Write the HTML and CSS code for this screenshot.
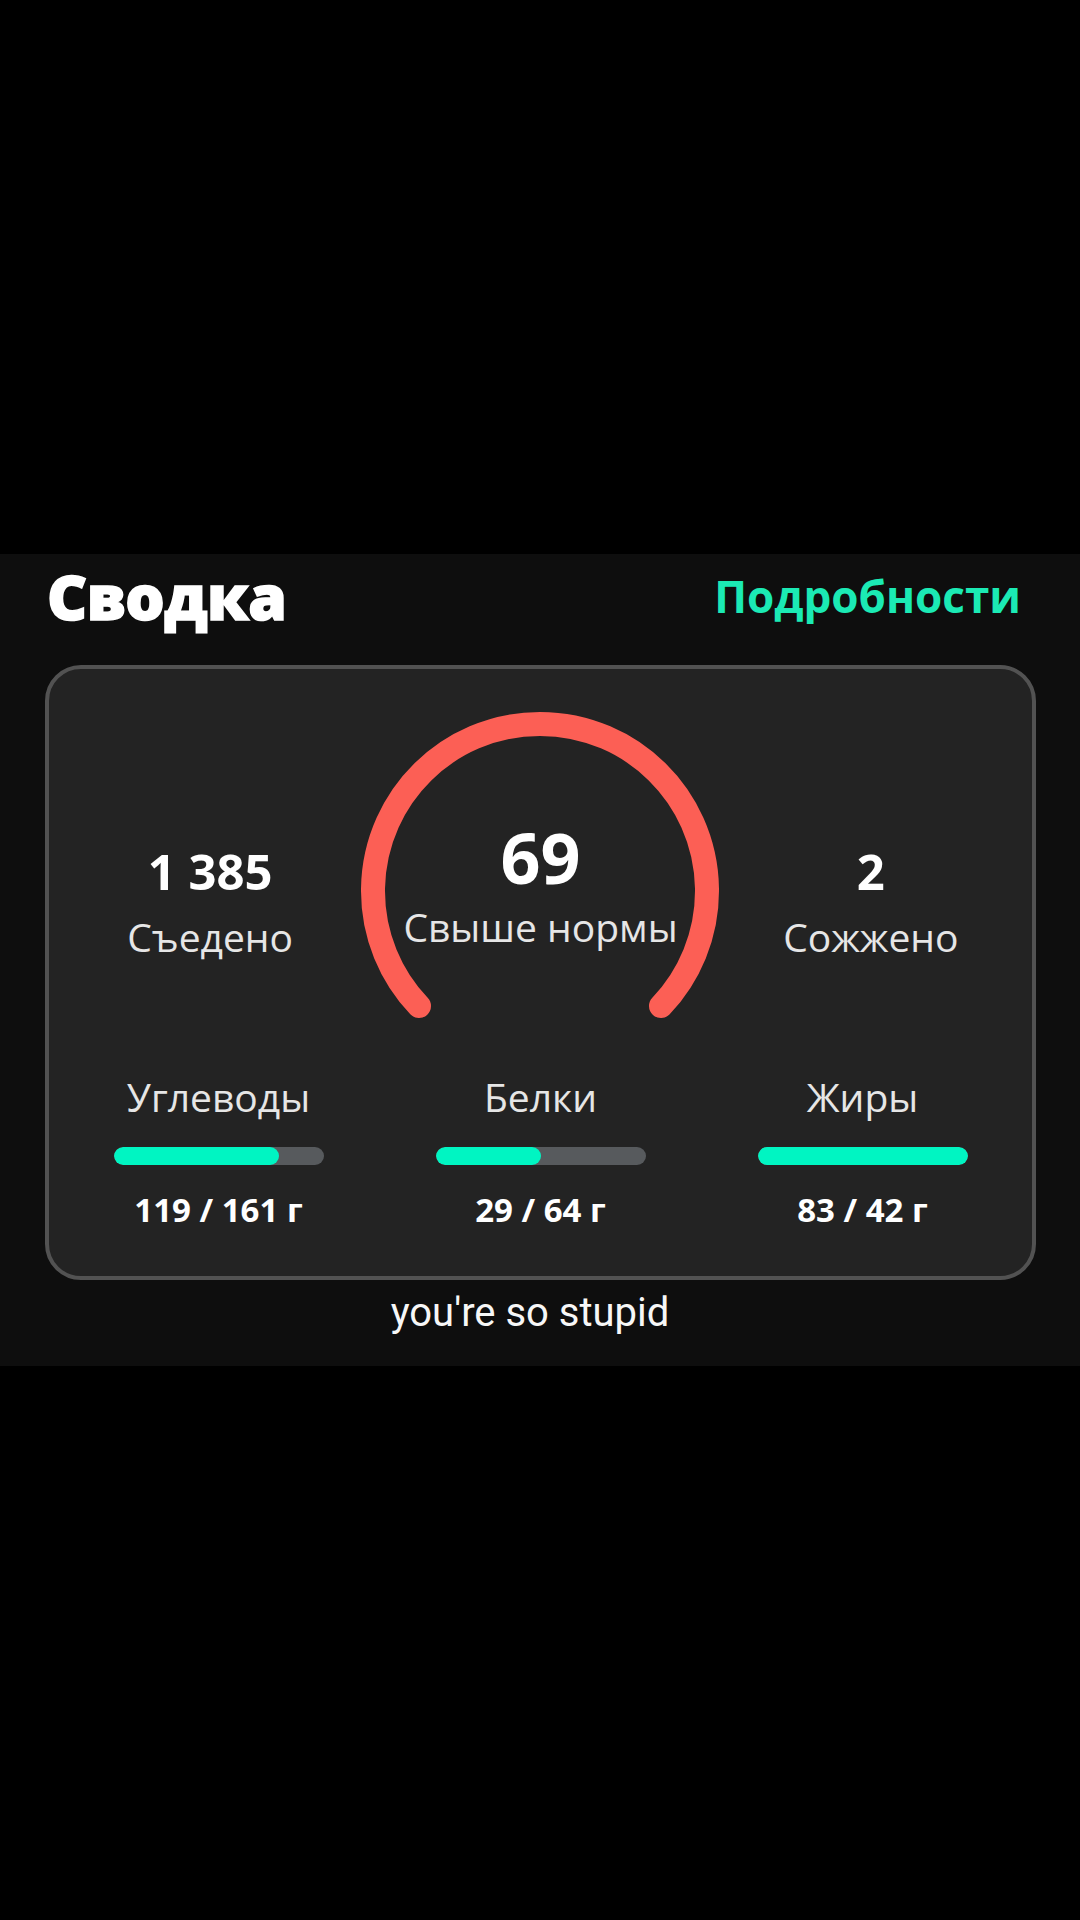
FILE: index.html
```html
<!DOCTYPE html>
<html lang="ru">
<head>
    <meta charset="UTF-8">
    <meta name="viewport" content="width=device-width, initial-scale=1.0">
    <title>Сводка</title>
    <link rel="stylesheet" href="styles.css">
</head>
<body>

    <div class="screen">
        <div class="header">
            <h1 class="title">Сводка</h1>
            <a class="details-link" href="#">Подробности</a>
        </div>

        <div class="summary-card">
            <div class="calories-row">
                <div class="stat">
                    <div class="stat-value">1 385</div>
                    <div class="stat-label">Съедено</div>
                </div>

                <div class="gauge">
                    <svg class="gauge-ring" width="360" height="310" viewBox="0 0 360 310">
                        <!-- 270 degree ring, open at the bottom -->
                        <path d="M 59 295 A 167 167 0 1 1 301 295" fill="none" stroke="#fc5f55" stroke-width="24" stroke-linecap="round"/>
                    </svg>
                    <div class="gauge-text">
                        <div class="gauge-value">69</div>
                        <div class="gauge-label">Свыше нормы</div>
                    </div>
                </div>

                <div class="stat">
                    <div class="stat-value">2</div>
                    <div class="stat-label">Сожжено</div>
                </div>
            </div>

            <div class="macros-row">
                <div class="macro">
                    <div class="macro-name">Углеводы</div>
                    <div class="bar"><div class="bar-fill" style="width: 79%"></div></div>
                    <div class="macro-value">119 / 161 г</div>
                </div>
                <div class="macro">
                    <div class="macro-name">Белки</div>
                    <div class="bar"><div class="bar-fill" style="width: 50%"></div></div>
                    <div class="macro-value">29 / 64 г</div>
                </div>
                <div class="macro">
                    <div class="macro-name">Жиры</div>
                    <div class="bar"><div class="bar-fill" style="width: 100%"></div></div>
                    <div class="macro-value">83 / 42 г</div>
                </div>
            </div>
        </div>

        <p class="caption">you're so stupid</p>
    </div>

</body>
</html>
```

FILE: styles.css
```css
/* Global Styles */
* {
    margin: 0;
    padding: 0;
    box-sizing: border-box;
}

body {
    background-color: #000;
    font-family: "Open Sans", "Noto Sans", sans-serif;
    color: #fff;
    height: 1920px;
    display: flex;
    flex-direction: column;
    justify-content: center;
    overflow: hidden;
}

.screen {
    background-color: #0e0e0e;
    height: 812px;
    padding-top: 6px;
}

/* Header */
.header {
    display: flex;
    justify-content: space-between;
    align-items: center;
    height: 71px;
    padding: 0 59px 0 47px;
}

.title {
    font-size: 62px;
    font-weight: 800;
    line-height: 1;
    letter-spacing: -0.5px;
    -webkit-text-stroke: 1.5px #fff;
}

.details-link {
    color: #1beab4;
    font-size: 44px;
    font-weight: 700;
    line-height: 1;
    text-decoration: none;
}

/* Summary card */
.summary-card {
    margin: 34px 44px 0 45px;
    background-color: #232323;
    border: 4px solid #525252;
    border-radius: 36px;
    padding: 42px 0 46px;
}

.calories-row {
    display: grid;
    grid-template-columns: 1fr 1fr 1fr;
    margin: 0 -4px;
}

.stat {
    text-align: center;
    padding-top: 131px;
}

.stat-value {
    font-size: 49px;
    font-weight: 700;
    line-height: 59px;
}

.stat-label {
    margin-top: 12px;
    font-size: 39px;
    line-height: 48px;
    color: #e6e6e6;
}

.gauge {
    position: relative;
    display: flex;
    justify-content: center;
}

.gauge-ring {
    display: block;
    margin: 0 -15px;
}

.gauge-text {
    position: absolute;
    top: 108px;
    left: 0;
    right: 0;
    text-align: center;
}

.gauge-value {
    font-size: 70px;
    font-weight: 700;
    line-height: 77px;
}

.gauge-label {
    margin-top: 7px;
    font-size: 39px;
    line-height: 48px;
    color: #e6e6e6;
    white-space: nowrap;
}

/* Macros */
.macros-row {
    display: grid;
    grid-template-columns: repeat(3, 322px);
    justify-content: center;
    margin-top: 52px;
}

.macro {
    display: flex;
    flex-direction: column;
    align-items: center;
}

.macro-name {
    font-size: 39px;
    line-height: 48px;
    color: #e6e6e6;
}

.bar {
    width: 210px;
    height: 18px;
    margin-top: 26px;
    background-color: #575a5d;
    border-radius: 9px;
    overflow: hidden;
}

.bar-fill {
    height: 100%;
    background-color: #00f5c2;
    border-radius: 9px;
}

.macro-value {
    margin-top: 25px;
    font-size: 33px;
    font-weight: 700;
    line-height: 40px;
}

/* Subtitle under the card */
.caption {
    margin-top: 9px;
    padding-right: 20px;
    font-family: Roboto, "Liberation Sans", sans-serif;
    font-size: 40px;
    font-weight: 400;
    line-height: 48px;
    text-align: center;
    color: #f7f7f7;
}
```
